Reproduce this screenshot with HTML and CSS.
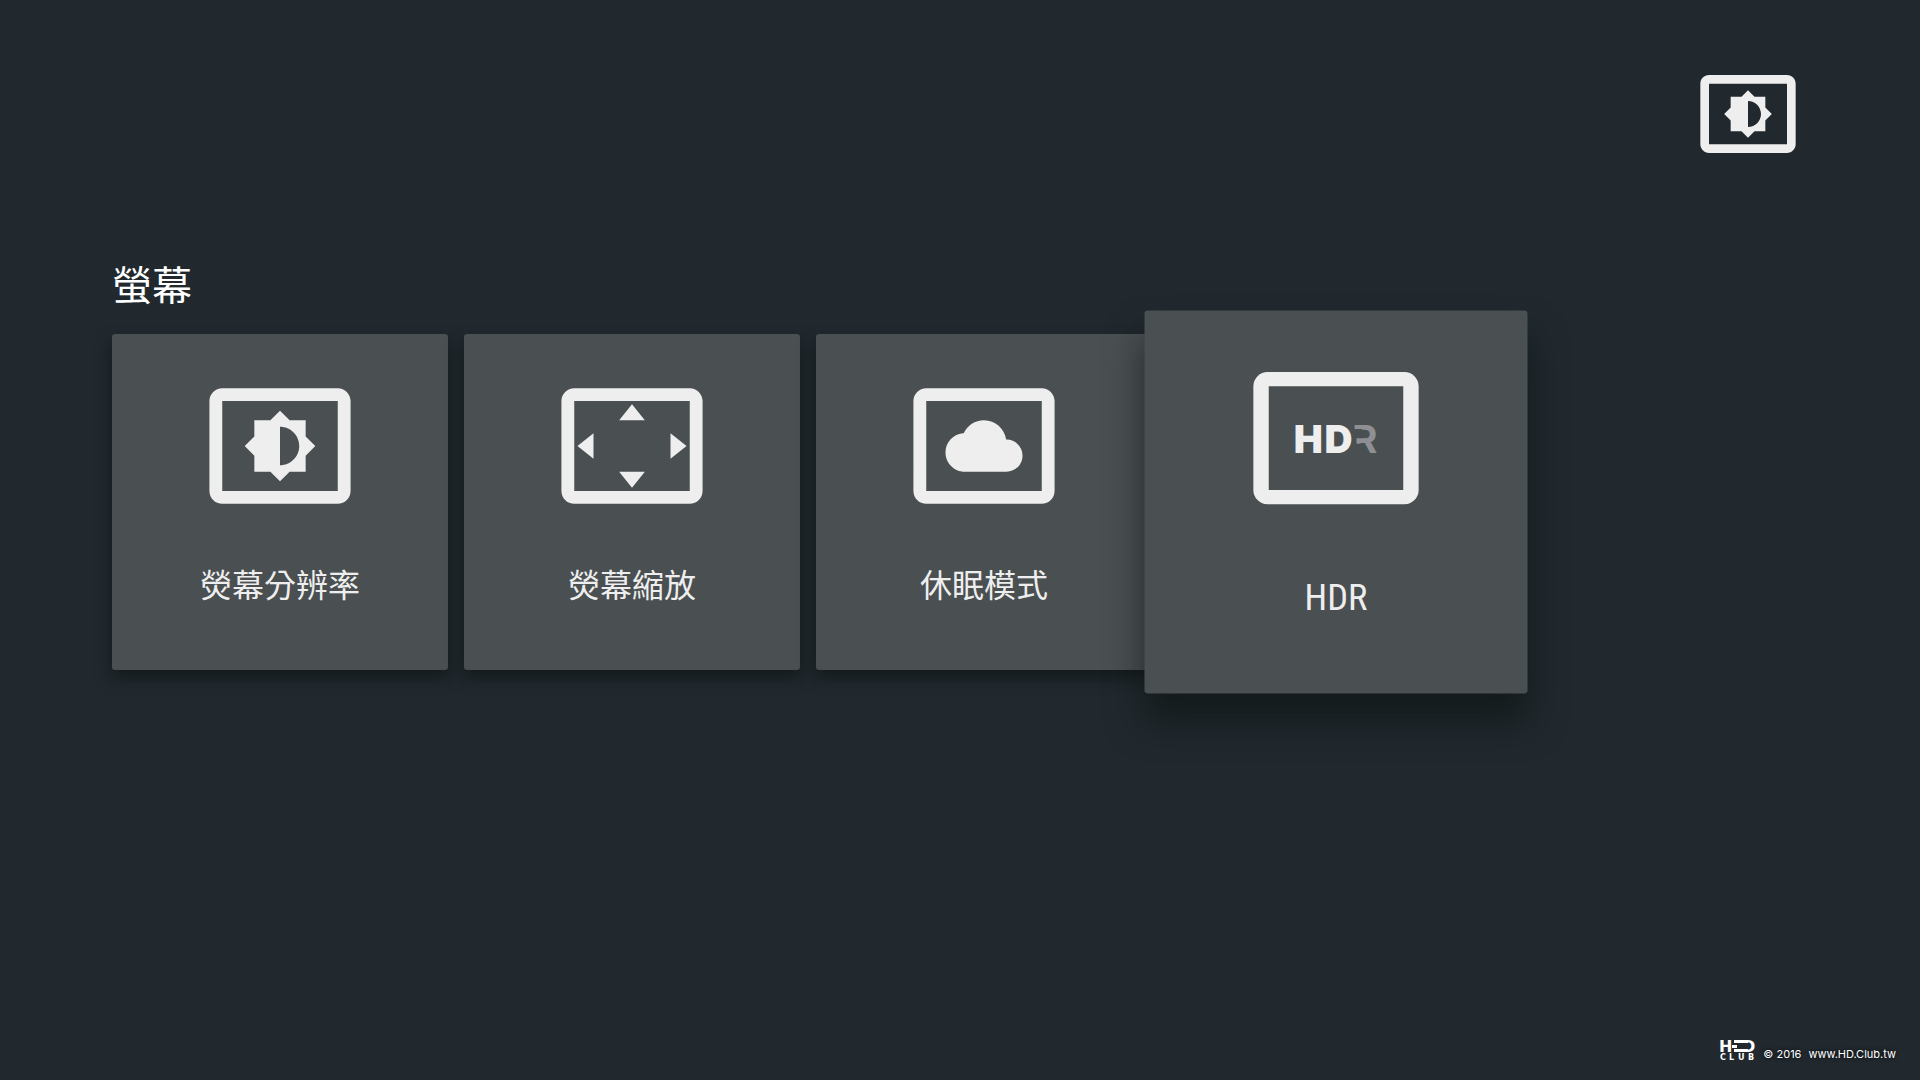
FILE: index.html
```html
<!DOCTYPE html>
<html lang="zh-Hant">
<head>
<meta charset="utf-8">
<meta name="viewport" content="width=device-width, initial-scale=1">
<title>螢幕</title>
<link rel="stylesheet" href="styles.css">
</head>
<body>
<header class="header">
  <svg class="header-icon" viewBox="0 0 24 24" aria-hidden="true">
    <path d="M21 3H3c-1.1 0-2 .9-2 2v14c0 1.1.9 2 2 2h18c1.1 0 2-.9 2-2V5c0-1.1-.9-2-2-2zm0 16H3V5h18v14zM8 16h2.5l1.5 1.5 1.5-1.5H16v-2.5l1.5-1.5-1.5-1.5V8h-2.5L12 6.500 10.500 8H8v2.500L6.500 12 8 13.500V16zm4-7c1.660 0 3 1.340 3 3s-1.340 3-3 3V9z"/>
  </svg>
</header>

<main class="content">
  <h1 class="title">螢幕</h1>
  <div class="cards">
    <button type="button" class="card">
      <svg class="card-icon" viewBox="0 0 24 24" aria-hidden="true">
        <path d="M21 3H3c-1.1 0-2 .9-2 2v14c0 1.1.9 2 2 2h18c1.1 0 2-.9 2-2V5c0-1.1-.9-2-2-2zm0 16H3V5h18v14zM8 16h2.5l1.5 1.5 1.5-1.5H16v-2.5l1.5-1.5-1.5-1.5V8h-2.5L12 6.500 10.500 8H8v2.500L6.500 12 8 13.500V16zm4-7c1.660 0 3 1.340 3 3s-1.340 3-3 3V9z"/>
      </svg>
      <span class="card-label">熒幕分辨率</span>
    </button>

    <button type="button" class="card">
      <svg class="card-icon" viewBox="0 0 24 24" aria-hidden="true">
        <path d="M12 5.500L10 8h4l-2-2.500zM18 10v4l2.500-2L18 10zM6 10l-2.500 2L6 14v-4zm8 6h-4l2 2.500L14 16zM21 3H3c-1.1 0-2 .9-2 2v14c0 1.1.9 2 2 2h18c1.1 0 2-.9 2-2V5c0-1.1-.9-2-2-2zm0 16H3V5h18v14z"/>
      </svg>
      <span class="card-label">熒幕縮放</span>
    </button>

    <button type="button" class="card">
      <svg class="card-icon" viewBox="0 0 24 24" aria-hidden="true">
        <path d="M9 16h6.500c1.380 0 2.500-1.120 2.500-2.500S16.880 11 15.500 11h-.050c-.240-1.690-1.690-3-3.450-3-1.400 0-2.600.830-3.160 2.020h-.160C7.170 10.180 6 11.450 6 13c0 1.660 1.340 3 3 3zM21 3H3c-1.1 0-2 .9-2 2v14c0 1.1.9 2 2 2h18c1.1 0 2-.9 2-2V5c0-1.1-.9-2-2-2zm0 16H3V5h18v14z"/>
      </svg>
      <span class="card-label">休眠模式</span>
    </button>

    <button type="button" class="card focused">
      <svg class="card-icon" viewBox="0 0 154 154" aria-hidden="true">
        <path fill-rule="evenodd" d="M17 19h120a12.500 12.500 0 0 1 12.500 12.500v91a12.500 12.500 0 0 1-12.500 12.500H17a12.500 12.500 0 0 1-12.500-12.500v-91A12.500 12.500 0 0 1 17 19zM18 31.500v91h118v-91z"/>
        <clipPath id="r-clip"><path d="M88 62h30v32h-18V82h-5v-5h5v-8h-7z"/></clipPath>
        <text class="mark mark-dim" x="91" y="90" clip-path="url(#r-clip)">R</text>
        <text class="mark" x="40 67" y="90">HD</text>
      </svg>
      <span class="card-label">HDR</span>
    </button>
  </div>
</main>

<footer class="footer">
  <svg class="logo" viewBox="0 0 36 20" aria-hidden="true">
    <clipPath id="d-clip"><path d="M27 0h10v13H27z"/></clipPath>
    <path d="M12 5h5v3h-5zM14 0h14v3H14zM14 9h14v3H14z"/>
    <text class="logo-top" x="-1" y="12">H</text>
    <text class="logo-top" x="22" y="12" clip-path="url(#d-clip)">D</text>
    <text class="logo-bottom" x="0 9 18 28" y="20">CLUB</text>
  </svg>
  <span>© 2016</span>
  <span>www.HD.Club.tw</span>
</footer>
</body>
</html>
```

FILE: styles.css
```css
* {
  box-sizing: border-box;
}

body {
  margin: 0;
  min-height: 100vh;
  display: flex;
  flex-direction: column;
  background-color: #21292f;
  color: #eee;
  font-family: "Roboto Condensed", "Liberation Sans Narrow", "Noto Sans CJK TC", sans-serif;
}

.header {
  display: flex;
  justify-content: flex-end;
  padding: 62px 120px 0;
}

.header-icon {
  width: 104px;
  height: 104px;
  fill: #eee;
}

.content {
  flex: 1;
  padding: 91px 112px 0;
}

.title {
  margin: 0 0 17px;
  font-size: 40px;
  line-height: 60px;
  font-weight: 400;
  color: #fff;
}

.cards {
  display: flex;
  gap: 16px;
}

.card {
  display: flex;
  flex-direction: column;
  align-items: center;
  width: 336px;
  height: 336px;
  padding: 35px 16px 0;
  border: none;
  border-radius: 3px;
  background-color: #4a4f51;
  color: #eee;
  font: inherit;
  cursor: pointer;
  box-shadow: 0 8px 16px rgba(10, 16, 14, 0.6);
}

.card.focused {
  position: relative;
  transform: scale(1.14);
  box-shadow: 0 24px 32px rgba(10, 16, 14, 0.6);
}

.card-icon {
  width: 154px;
  height: 154px;
  fill: #eee;
}

.card-label {
  margin-top: 39px;
  font-size: 32px;
  line-height: 48px;
}

.mark {
  font-family: Inter, sans-serif;
  font-size: 34px;
  font-weight: 900;
}

.mark-dim {
  fill: #8e8f93;
  font-weight: 700;
}

.footer {
  display: flex;
  justify-content: flex-end;
  align-items: flex-end;
  gap: 7px;
  padding: 0 24px 20px;
  color: #fff;
  font-family: Inter, "Liberation Sans", sans-serif;
  font-size: 11px;
  line-height: 12px;
  text-shadow: 0 0 4px #000;
}

.logo {
  width: 36px;
  height: 20px;
  fill: #fff;
  overflow: visible;
  text-shadow: none;
}

.logo-top {
  font-family: "DejaVu Sans", sans-serif;
  font-size: 16px;
  font-weight: 700;
}

.logo-bottom {
  font-family: "DejaVu Sans", sans-serif;
  font-size: 8px;
  font-weight: 700;
}
```
